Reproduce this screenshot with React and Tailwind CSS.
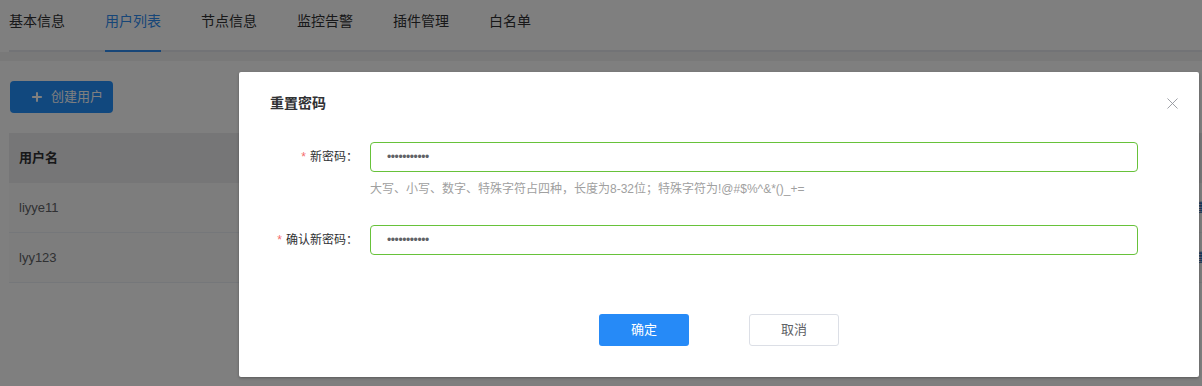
import { X, Plus } from "lucide-react"

const tabs = ["基本信息", "用户列表", "节点信息", "监控告警", "插件管理", "白名单"]
const users = ["liyye11", "lyy123"]

function Field({ label, children }) {
  return (
    <div className="flex items-center">
      <label className="w-[131px] shrink-0 pr-[12px] text-right text-[12px] text-[#303133]">
        <span className="mr-[4px] text-[#f56c6c]">*</span>
        {label}：
      </label>
      <div className="mr-[61px] flex-1">{children}</div>
    </div>
  )
}

function PasswordBox() {
  return (
    <div className="flex h-[30px] items-center rounded-[4px] border border-[#67c23a] bg-white pl-[16px]">
      <span className="text-[12px] leading-none tracking-[-0.4px] text-[#606266]">•••••••••••</span>
    </div>
  )
}

export default function App() {
  return (
    <div className="relative flex h-[386px] w-[1202px] flex-col overflow-hidden bg-[#f2f2f3] font-['Liberation_Sans','Noto_Sans_CJK_SC',sans-serif]">
      {/* tabs */}
      <div className="bg-white pl-[9px]">
        <div className="flex h-[52px] gap-[40px] border-b-2 border-[#e4e7ed]">
          {tabs.map((t, i) => (
            <div
              key={t}
              className={
                "-mb-[2px] flex h-[52px] items-start border-b-2 pt-[11px] text-[14px] " +
                (i === 1 ? "border-[#2f8cf0] text-[#2f8cf0]" : "border-transparent text-[#303133]")
              }
            >
              {t}
            </div>
          ))}
        </div>
      </div>

      {/* content */}
      <div className="mt-[9px] flex-1 bg-white">
        <div className="pl-[10px] pt-[20px]">
          <button className="flex h-[32px] w-[103px] items-center gap-[7px] rounded-[4px] bg-[#2390fd] pl-[20px] text-[13px] text-white">
            <Plus size={14} strokeWidth={3.5} />
            创建用户
          </button>
        </div>
        <div className="ml-[9px] mt-[20px]">
          <div className="flex h-[50px] items-center bg-[#ededee] pl-[10px] text-[13px] font-bold text-[#303133]">
            用户名
          </div>
          {users.map((u) => (
            <div key={u} className="flex h-[50px] items-center border-b border-[#ebeef5] bg-[#fbfbfb]">
              <div className="flex-1 pl-[10px] text-[13px] text-[#606266]">{u}</div>
              <div className="w-[13px] shrink-0 overflow-hidden whitespace-nowrap pl-[6px] text-[12px] text-[#1e5fb0]">重置密码</div>
            </div>
          ))}
        </div>
      </div>

      {/* dialog */}
      <div className="absolute inset-0 bg-black/50">
        <div className="ml-[239px] mt-[72px] h-[305px] w-[960px] rounded-[2px] bg-white shadow-[0_1px_3px_rgba(0,0,0,0.3)]">
          <div className="flex items-center justify-between pl-[31px] pr-[17px] pt-[21px]">
            <h2 className="text-[14px] font-bold leading-[20px] text-[#303133]">重置密码</h2>
            <X size={19} strokeWidth={1.1} className="text-[#909399]" />
          </div>

          <div className="mt-[29px]">
            <Field label="新密码">
              <PasswordBox />
            </Field>
            <p className="ml-[131px] mt-[8px] text-[12px] leading-[18px] text-[#a0a0a0]">
              大写、小写、数字、特殊字符占四种，长度为8-32位；特殊字符为!@#$%^&amp;*()_+=
            </p>
            <div className="mt-[27px]">
              <Field label="确认新密码">
                <PasswordBox />
              </Field>
            </div>
          </div>

          <div className="mt-[59px] flex justify-center gap-[60px]">
            <button className="h-[32px] w-[90px] rounded-[3px] bg-[#268af7] text-[13px] text-white">确定</button>
            <button className="h-[32px] w-[90px] rounded-[3px] border border-[#dcdfe6] bg-white text-[13px] text-[#606266]">
              取消
            </button>
          </div>
        </div>
      </div>
    </div>
  )
}
